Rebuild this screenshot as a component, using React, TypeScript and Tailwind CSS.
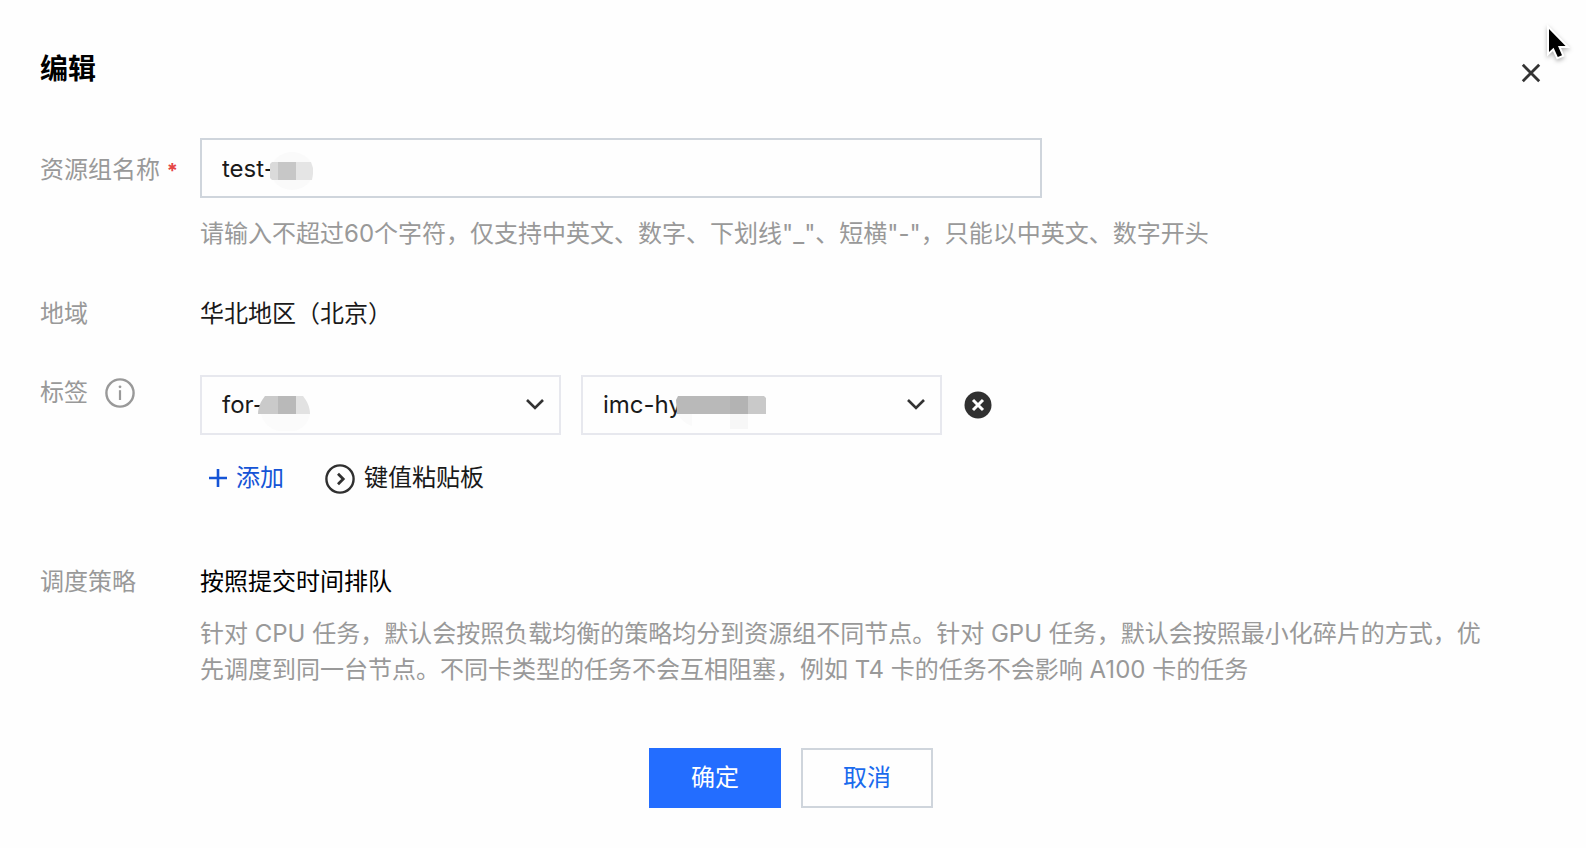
import { useState, type ReactNode } from "react";

interface FormRowProps {
  label: ReactNode;
  htmlFor?: string;
  labelClassName?: string;
  className?: string;
  children: ReactNode;
}

function FormRow({ label, htmlFor, labelClassName = "h-9", className = "", children }: FormRowProps) {
  return (
    <div className={`flex items-start ${className}`}>
      <div className={`flex w-40 shrink-0 items-center text-[#999] ${labelClassName}`}>
        {htmlFor ? <label htmlFor={htmlFor}>{label}</label> : label}
      </div>
      <div className="min-w-0 flex-1">{children}</div>
    </div>
  );
}

interface TagSelectProps {
  label: string;
  value: string;
  children: ReactNode;
}

function TagSelect({ label, value, children }: TagSelectProps) {
  return (
    <div className="relative w-[361px]">
      <select
        aria-label={label}
        defaultValue={value}
        className="h-15 w-full appearance-none border-2 border-[#e7e8ee] bg-transparent px-5 text-[#1a1a1a] outline-none"
      >
        <option value={value}>{value}</option>
      </select>
      {children}
      <svg
        className="pointer-events-none absolute top-5 right-4 h-5 w-5"
        viewBox="0 0 20 20"
        fill="none"
        stroke="#333"
        strokeWidth="2.6"
      >
        <path d="M2 5 10 13 18 5" />
      </svg>
    </div>
  );
}

function CloseIcon() {
  return (
    <svg className="h-6 w-6" viewBox="0 0 24 24" fill="none" stroke="#333" strokeWidth="2.8">
      <path d="M3.8 3.8 20.2 20.2M20.2 3.8 3.8 20.2" />
    </svg>
  );
}

function InfoIcon() {
  return (
    <svg className="h-[30px] w-[30px]" viewBox="0 0 30 30" fill="none">
      <circle cx="15" cy="15" r="13.6" stroke="#999" strokeWidth="2.4" />
      <path d="M15 12.2V22" stroke="#999" strokeWidth="2.2" />
      <circle cx="15" cy="8.8" r="1.4" fill="#999" />
    </svg>
  );
}

function PointerIcon() {
  return (
    <svg
      className="pointer-events-none absolute top-6 right-2 h-10 w-8"
      viewBox="0 0 32 40"
      style={{ filter: "drop-shadow(0 2px 2px rgba(0,0,0,0.3))" }}
    >
      <path
        d="M3 5V28L7.6 23.8 11.8 33 16 31.2 12 22H19.6Z"
        fill="#000"
        stroke="#fff"
        strokeWidth="4"
        paintOrder="stroke"
      />
    </svg>
  );
}

export default function App() {
  const [name, setName] = useState("test-");

  return (
    <main className="relative min-h-screen bg-[#fefefe] px-10 pt-12 pb-10 font-[Inter,'Noto_Sans_CJK_SC',sans-serif] text-2xl leading-9 text-[#1a1a1a]">
      <header className="flex items-center justify-between pr-[3px]">
        <h1 className="text-[28px] leading-[42px] font-bold text-black">编辑</h1>
        <button type="button" aria-label="关闭" className="mt-2">
          <CloseIcon />
        </button>
      </header>
      <PointerIcon />

      <form className="mt-12" onSubmit={(event) => event.preventDefault()}>
        <div className="pr-13">
          <FormRow
            htmlFor="group-name"
            labelClassName="h-16"
            label={
              <>
                资源组名称 <span className="text-xl font-bold text-[#e54545]">*</span>
              </>
            }
          >
            <div className="relative max-w-[842px]">
              <input
                id="group-name"
                type="text"
                required
                value={name}
                onChange={(event) => setName(event.target.value)}
                className="h-15 w-full border-2 border-[#cfd5dc] bg-transparent px-5 outline-none"
              />
              <svg className="pointer-events-none absolute top-3 left-[70px] h-10 w-11" viewBox="0 0 44 40">
                <ellipse cx="22" cy="21" rx="21" ry="19" fill="#fafafa" />
                <path d="M2 12H8V30H2L0 28V14Z" fill="#dadada" />
                <path d="M8 12H26V30H8Z" fill="#c7c7c7" />
                <path d="M26 12H41L43 18V24L42 30H26Z" fill="#e5e5e5" />
              </svg>
            </div>
            <p className="mt-[18px] text-[#999]">
              请输入不超过60个字符，仅支持中英文、数字、下划线"_"、短横"-"，只能以中英文、数字开头
            </p>
          </FormRow>

          <FormRow label="地域" className="mt-11">
            <p>华北地区（北京）</p>
          </FormRow>

          <FormRow
            className="mt-[43px]"
            label={
              <span className="flex items-center gap-[17px]">
                标签
                <InfoIcon />
              </span>
            }
          >
            <div className="flex items-center gap-5">
              <TagSelect label="标签键" value="for-">
                <svg className="pointer-events-none absolute top-5 left-[58px] h-9 w-[52px]" viewBox="0 0 52 36">
                  <path d="M3 19H52C50 30 42 37 29 37 16 37 6 31 3 19Z" fill="#fbfbfb" />
                  <path d="M7 1H20V19H0C0 12 3 6 7 1Z" fill="#cacaca" />
                  <path d="M20 1H38V19H20Z" fill="#b9b9b9" />
                  <path d="M38 1H45C49 6 52 12 52 19H38Z" fill="#e2e2e2" />
                </svg>
              </TagSelect>
              <TagSelect label="标签值" value="imc-hy">
                <svg className="pointer-events-none absolute top-5 left-[95px] h-9 w-[90px]" viewBox="0 0 90 36">
                  <path d="M2 19H16V31C10 29 5 25 2 19Z" fill="#fafafa" />
                  <path d="M54 19H72V34H54Z" fill="#f7f7f7" />
                  <path d="M2 1H54V19H1L0 5Z" fill="#b9b9b9" />
                  <path d="M54 1H72V19H54Z" fill="#b3b3b3" />
                  <path d="M72 1H88L90 3V19H72Z" fill="#c9c9c9" />
                </svg>
              </TagSelect>
              <button type="button" aria-label="删除标签">
                <svg className="h-8 w-8" viewBox="0 0 32 32" fill="none">
                  <circle cx="16" cy="16" r="13.5" fill="#303030" />
                  <path d="M11 11 21 21M21 11 11 21" stroke="#fff" strokeWidth="3" />
                </svg>
              </button>
            </div>
            <div className="mt-[25px] flex items-center gap-10 pl-2">
              <button type="button" className="flex items-center gap-2 text-[#1554d6]">
                <svg className="h-5 w-5" viewBox="0 0 20 20" fill="none" stroke="currentColor" strokeWidth="2.6">
                  <path d="M10 1V19M1 10H19" />
                </svg>
                添加
              </button>
              <button type="button" className="flex items-center gap-2">
                <svg className="h-8 w-8" viewBox="0 0 32 32" fill="none" stroke="#303030">
                  <circle cx="16" cy="17" r="13.6" strokeWidth="2.4" />
                  <path d="M14 11.8 19.2 17 14 22.2" strokeWidth="2.8" />
                </svg>
                键值粘贴板
              </button>
            </div>
          </FormRow>

          <FormRow label="调度策略" className="mt-17">
            <p className="text-black">按照提交时间排队</p>
            <p className="mt-4 text-[#999]">
              针对 CPU 任务，默认会按照负载均衡的策略均分到资源组不同节点。针对 GPU
              任务，默认会按照最小化碎片的方式，优先调度到同一台节点。不同卡类型的任务不会互相阻塞，例如 T4 卡的任务不会影响
              A100 卡的任务
            </p>
          </FormRow>
        </div>

        <footer className="mt-15 flex justify-center gap-5 pr-1">
          <button type="submit" className="h-15 w-[132px] bg-[#236dff] text-white">
            确定
          </button>
          <button type="button" className="h-15 w-[132px] border-2 border-[#cfd5dc] text-[#1a6aed]">
            取消
          </button>
        </footer>
      </form>
    </main>
  );
}
